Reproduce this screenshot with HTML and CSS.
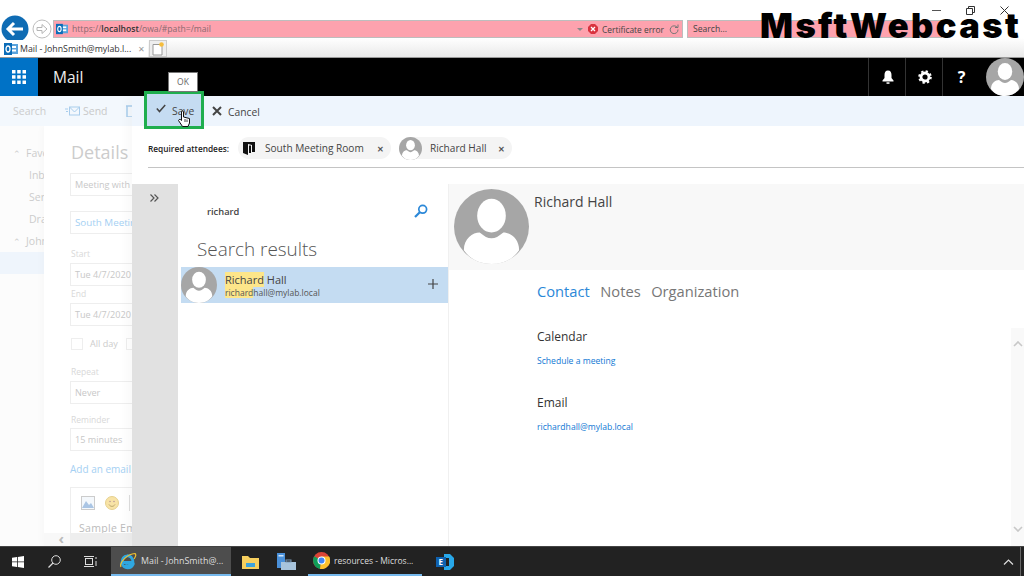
FILE: index.html
```html
<!DOCTYPE html>
<html lang="en">
<head>
<meta charset="utf-8">
<title>Mail - JohnSmith@mylab.local</title>
<link rel="stylesheet" href="styles.css">
</head>
<body>
<svg class="defs" width="0" height="0" aria-hidden="true">
  <symbol id="person" viewBox="0 0 76 76">
    <circle cx="38" cy="38" r="38" fill="#a6a6a6"/>
    <ellipse cx="38" cy="27" rx="14.5" ry="17" fill="#fff"/>
    <path d="M10 62C10 50 19 44 26 44C31 48 34 50 38 50C42 50 45 48 50 44C57 44 66 50 66 62C60 71 50 76 38 76C26 76 16 71 10 62Z" fill="#fff"/>
  </symbol>
  <symbol id="ol" viewBox="0 0 14 14">
    <rect x="5" y="2" width="9" height="10" fill="#5ba3dc"/>
    <rect x="7" y="4" width="5" height="2" fill="#fff"/><rect x="7" y="7.5" width="5" height="2" fill="#fff"/>
    <rect x="0" y="1" width="8" height="12" fill="#0b6cb8"/>
    <ellipse cx="4" cy="7" rx="2" ry="3" fill="none" stroke="#fff" stroke-width="1.3"/>
  </symbol>
</svg>

<header class="browser">
  <div class="nav-row">
    <div class="back">
      <svg width="28" height="28" viewBox="0 0 28 28"><circle cx="14" cy="14" r="13.5" fill="#0f6cb4"/><path d="M22 14H7M13 8L7 14L13 20" fill="none" stroke="#fff" stroke-width="3"/></svg>
    </div>
    <div class="forward">
      <svg width="20" height="20" viewBox="0 0 20 20"><circle cx="10" cy="10" r="9" fill="#fff" stroke="#bdbdbd"/><path d="M5 8.5H10V5.500L15 10L10 14.500V11.500H5Z" fill="none" stroke="#b5b5b5"/></svg>
    </div>
    <div class="addr">
      <svg class="fav" width="14" height="14"><use href="#ol"/></svg>
      <span class="url">https://<b>localhost</b>/owa/#path=/mail</span>
      <span class="drop"></span>
      <svg class="cert" width="10" height="10" viewBox="0 0 10 10"><path d="M3 0H7L10 3V7L7 10H3L0 7V3Z" fill="#d9333f"/><path d="M3 3L7 7M7 3L3 7" stroke="#fff" stroke-width="1.300"/></svg>
      <span class="cert-text">Certificate error</span>
      <svg class="reload" width="10" height="10" viewBox="0 0 10 10"><path d="M8.300 3.500A3.900 3.900 0 1 0 9 5.500M6 3.500H9V0.500" fill="none" stroke="#777"/></svg>
    </div>
    <div class="search-box">Search...</div>
  </div>
  <div class="tab-row">
    <div class="tab">
      <svg width="14" height="14"><use href="#ol"/></svg>
      <span class="tab-title">Mail - JohnSmith@mylab.l...</span>
      <span class="tab-x">✕</span>
    </div>
    <div class="new-tab">
      <svg width="12" height="14" viewBox="0 0 12 14"><path d="M1 2.500H8L10 4.500V13H1Z" fill="#fff" stroke="#999"/><circle cx="9.500" cy="2.500" r="2.300" fill="#f6bd3c"/></svg>
    </div>
  </div>
  <div class="win-ctl">
    <svg width="9" height="9" viewBox="0 0 9 9"><path d="M0 4.500H9" stroke="#555"/></svg>
    <svg width="9" height="9" viewBox="0 0 9 9"><path d="M2.500 2.500V.5H8.500V6.500H6.500M.5 2.500H6.500V8.500H.5Z" fill="none" stroke="#333"/></svg>
    <svg width="9" height="9" viewBox="0 0 9 9"><path d="M.5 .5L8.500 8.500M8.500 .5L.5 8.500" stroke="#333"/></svg>
  </div>
</header>
<div class="watermark">MsftWebcast</div>

<div class="suite">
  <div class="waffle">
    <svg width="14" height="14" viewBox="0 0 14 14" fill="#fff"><rect width="3.500" height="3.500"/><rect x="5.200" width="3.500" height="3.500"/><rect x="10.500" width="3.500" height="3.500"/><rect y="5.200" width="3.500" height="3.500"/><rect x="5.200" y="5.200" width="3.500" height="3.500"/><rect x="10.500" y="5.200" width="3.500" height="3.500"/><rect y="10.500" width="3.500" height="3.500"/><rect x="5.200" y="10.500" width="3.500" height="3.500"/><rect x="10.500" y="10.500" width="3.500" height="3.500"/></svg>
  </div>
  <div class="suite-name">Mail</div>
  <div class="suite-btn">
    <svg width="12" height="14" viewBox="0 0 12 14"><path d="M6 0.500C8.500 .5 9.500 2.500 9.500 5V8L11.500 10.500V11.500H.5V10.500L2.500 8V5C2.500 2.500 3.500 .5 6 .5Z" fill="#fff"/><rect x="4.500" y="12.300" width="3" height="1.500" fill="#fff"/></svg>
  </div>
  <div class="suite-btn">
    <svg width="14" height="14" viewBox="0 0 14 14"><circle cx="7" cy="7" r="4" fill="none" stroke="#fff" stroke-width="2.800"/><circle cx="7" cy="7" r="5.800" fill="none" stroke="#fff" stroke-width="2" stroke-dasharray="2.300 2.250"/></svg>
  </div>
  <div class="suite-btn help">?</div>
  <svg class="suite-avatar" width="38" height="38"><use href="#person"/></svg>
</div>

<main class="stage">
  <div class="bg-app">
    <div class="bg-toolbar">
      <span class="bg-search">Search</span>
      <svg class="bg-send" width="15" height="11" viewBox="0 0 15 11"><rect x="4.500" y="1" width="10" height="8" fill="none" stroke="#a9cdec"/><path d="M4.500 1L9.500 6L14.500 1M0 3H3M1 5.500H3" fill="none" stroke="#a9cdec"/></svg>
      <span class="bg-sendt">Send</span>
      <svg class="bg-trash" width="9" height="12" viewBox="0 0 9 12"><path d="M0 1H9M1 1V12H8V1" fill="none" stroke="#a9cdec" stroke-width="1.500"/></svg>
    </div>
    <div class="bg-body">
      <nav class="bg-nav">
        <div class="nav-item group"><span class="caret">⌃</span>Favorites</div>
        <div class="nav-item">Inbox</div>
        <div class="nav-item">Sent</div>
        <div class="nav-item">Drafts</div>
        <div class="nav-item group"><span class="caret">⌃</span>John</div>
        <div class="nav-sel"></div>
      </nav>
      <section class="bg-panel">
        <h2 class="bg-h">Details</h2>
        <div class="bg-field f1">Meeting with Hall</div>
        <div class="bg-field f2 link">South Meeting Room</div>
        <div class="bg-label l1">Start</div>
        <div class="bg-field f3">Tue 4/7/2020</div>
        <div class="bg-label l2">End</div>
        <div class="bg-field f3">Tue 4/7/2020</div>
        <div class="bg-check"><span class="box"></span>All day<span class="box b2"></span></div>
        <div class="bg-label l3">Repeat</div>
        <div class="bg-field f3">Never</div>
        <div class="bg-label l4">Reminder</div>
        <div class="bg-field f4">15 minutes</div>
        <div class="bg-add link">Add an email reminder</div>
        <div class="bg-editor">
          <div class="ed-icons">
            <svg width="14" height="14" viewBox="0 0 14 14"><rect x=".5" y=".5" width="13" height="13" fill="#f4f8fc" stroke="#ccc"/><path d="M1 12L5 5L8 9L10 7L13 12Z" fill="#aac5e4"/></svg>
            <svg width="14" height="14" viewBox="0 0 14 14"><circle cx="7" cy="7" r="6.500" fill="#f8e3a6" stroke="#e5d08f"/><circle cx="5" cy="5.500" r=".8" fill="#b99"/><circle cx="9" cy="5.500" r=".8" fill="#b99"/><path d="M4 8.500C5.500 11 8.500 11 10 8.500" fill="none" stroke="#b9a56a"/></svg>
            <span class="ed-sep"></span>
          </div>
          <div class="ed-text">Sample Email</div>
        </div>
      </section>
    </div>
    <div class="bg-scroll"><span class="bg-left">‹</span></div>
  </div>

  <div class="modal">
    <div class="m-toolbar">
      <button class="m-save">
        <svg width="10" height="9" viewBox="0 0 10 9"><path d="M.8 4.500L3.500 7.500L9.200 1" fill="none" stroke="#444" stroke-width="1.500"/></svg>
        <span>Save</span>
      </button>
      <button class="m-cancel">
        <svg width="10" height="10" viewBox="0 0 10 10"><path d="M1 1L9 9M9 1L1 9" stroke="#444" stroke-width="2"/></svg>
        <span>Cancel</span>
      </button>
    </div>
    <div class="attendees">
      <span class="att-label">Required attendees:</span>
      <span class="chip room">
        <svg width="12" height="13" viewBox="0 0 12 13"><path d="M0 0H12V10H9V3L5 2V13L0 11Z" fill="#111"/><path d="M6 3.500H8V11H6Z" fill="#111"/></svg>
        <span class="chip-t">South Meeting Room</span>
        <span class="chip-x">✕</span>
      </span>
      <span class="chip person">
        <svg width="23" height="23"><use href="#person"/></svg>
        <span class="chip-t">Richard Hall</span>
        <span class="chip-x">✕</span>
      </span>
    </div>
    <div class="m-body">
      <aside class="rail">
        <svg width="9" height="8" viewBox="0 0 9 8"><path d="M.5 .5L4 4L.5 7.500M4.500 .5L8 4L4.500 7.500" fill="none" stroke="#555" stroke-width="1.200"/></svg>
      </aside>
      <section class="results">
        <div class="q-row">
          <span class="query">richard</span>
          <svg width="14" height="14" viewBox="0 0 14 14"><circle cx="8.700" cy="5.300" r="3.900" fill="none" stroke="#2b88d8" stroke-width="1.700"/><path d="M5.800 8.200L1 13" stroke="#2b88d8" stroke-width="2.200"/></svg>
        </div>
        <h2 class="res-h">Search results</h2>
        <div class="res-row">
          <svg width="36" height="36"><use href="#person"/></svg>
          <div class="res-text">
            <div class="res-name"><mark>Richard</mark> Hall</div>
            <div class="res-mail"><mark>richard</mark>hall@mylab.local</div>
          </div>
          <svg class="res-plus" width="10" height="10" viewBox="0 0 10 10"><path d="M5 0V10M0 5H10" stroke="#444" stroke-width="1.200"/></svg>
        </div>
      </section>
      <section class="card">
        <div class="card-head">
          <svg width="75" height="75"><use href="#person"/></svg>
          <h2 class="card-name">Richard Hall</h2>
        </div>
        <div class="card-body">
          <div class="tabs"><span class="on">Contact</span><span>Notes</span><span>Organization</span></div>
          <h3 class="sec-h cal">Calendar</h3>
          <a class="sec-l">Schedule a meeting</a>
          <h3 class="sec-h em">Email</h3>
          <a class="sec-l">richardhall@mylab.local</a>
          <div class="scroll">
            <svg width="10" height="6" viewBox="0 0 10 6"><path d="M1 5L5 1L9 5" fill="none" stroke="#c8c8c8" stroke-width="1.600"/></svg>
            <svg width="10" height="6" viewBox="0 0 10 6"><path d="M1 1L5 5L9 1" fill="none" stroke="#c8c8c8" stroke-width="1.600"/></svg>
          </div>
        </div>
      </section>
    </div>
  </div>
  <div class="tooltip">OK</div>
  <svg class="hand" width="13" height="17" viewBox="0 0 13 17"><path d="M3.500 9V2C3.500 .5 5.500 .5 5.500 2V7L11.500 8.500V13L10 16.500H4.500L.5 10.500C1 9 2.500 9 3.500 10.500Z" fill="#fff" stroke="#111"/><path d="M7 9V12M9 9.500V12" stroke="#111" stroke-width=".8"/></svg>
</main>

<footer class="taskbar">
  <svg class="tb-win" width="12" height="12" viewBox="0 0 12 12" fill="#fff"><path d="M0 1.700L5 1V5.500H0ZM5.800 .9L12 0V5.500H5.800ZM0 6.300H5V11L0 10.300ZM5.800 6.300H12V12L5.800 11.100Z"/></svg>
  <svg class="tb-search" width="13" height="13" viewBox="0 0 13 13"><circle cx="8" cy="5" r="4.300" fill="none" stroke="#ddd"/><path d="M5 8L.5 12.500" stroke="#ddd" stroke-width="1.200"/></svg>
  <svg class="tb-view" width="13" height="11" viewBox="0 0 13 11"><rect x="1.500" y="2.500" width="7" height="6" fill="none" stroke="#ddd"/><path d="M0 .5H10M0 10.500H10M12 1V3M12 5V10" stroke="#ddd"/></svg>
  <div class="tb-app active ie">
    <svg width="18" height="18" viewBox="0 0 18 18"><path d="M3 10.500H14C14 6 11 3.500 8 3.800C5 4 3 7 3 10.500C3 14 6 16 9 15.800C11.500 15.600 13 14.500 13.800 12.800H10.500C9.500 14 7 14 6.300 12.500" fill="none" stroke="#2fa7e0" stroke-width="2.800"/><path d="M2 15C0 11 8 2 16 1.500C17.500 2.500 16.500 5 15 7" fill="none" stroke="#f2c230" stroke-width="1.200"/></svg>
    <span>Mail - JohnSmith@...</span>
  </div>
  <svg class="tb-icon folder" width="17" height="14" viewBox="0 0 17 14"><path d="M0 1H6L8 3H17V14H0Z" fill="#f6cf5e"/><rect x="4" y="8" width="9" height="4" fill="#3da3dc"/></svg>
  <svg class="tb-icon server" width="19" height="17" viewBox="0 0 19 17"><rect width="8" height="15" fill="#4a90d9"/><rect x="1.500" y="2" width="5" height="1.500" fill="#cfe5fa"/><rect x="4" y="9" width="15" height="8" fill="#a8c4dc"/><rect x="9" y="7" width="5" height="2" fill="none" stroke="#7a9ab8"/></svg>
  <div class="tb-app open chrome">
    <svg width="17" height="17" viewBox="0 0 17 17"><circle cx="8.500" cy="8.500" r="8.500" fill="#db4437"/><path d="M8.500 8.500L1.200 4.300A8.500 8.500 0 0 0 7 16.900Z" fill="#0f9d58"/><path d="M8.500 4.500H16.100A8.500 8.500 0 0 1 7 16.900Z" fill="#fbc02d"/><circle cx="8.500" cy="8.500" r="4" fill="#fff"/><circle cx="8.500" cy="8.500" r="3" fill="#4285f4"/></svg>
    <span>resources - Micros...</span>
  </div>
  <svg class="tb-icon ex" width="18" height="16" viewBox="0 0 18 16"><path d="M8 0L14 0L18 4V12L14 16H8V12H13V4H8Z" fill="#28a8ea"/><rect y="3" width="10" height="10" fill="#0f62b0"/><text x="2.500" y="11" class="ex-t">E</text></svg>
  <svg class="tb-chev" width="11" height="6" viewBox="0 0 11 6"><path d="M1 5.500L5.500 1L10 5.500" fill="none" stroke="#ddd" stroke-width="1.200"/></svg>
  <span class="tb-end"></span>
</footer>
</body>
</html>
```
FILE: styles.css
```css
* { box-sizing: border-box; }
html, body { margin: 0; padding: 0; }
body {
  width: 1024px; height: 576px; overflow: hidden; position: relative;
  display: flex; flex-direction: column; background: #fff;
  font-family: "Open Sans", "Noto Sans", sans-serif; color: #444;
}
h2, h3 { margin: 0; font-weight: 400; }
.defs { position: absolute; }
svg { display: block; flex: none; }

/* browser chrome */
.browser { height: 58px; flex: none; position: relative; border-bottom: 1px solid #999; background: linear-gradient(#fff 38px, #e9e9e9 57px); }
.nav-row { display: flex; align-items: center; height: 28px; margin-top: 15px; padding-left: 1px; position: absolute; top: 0; left: 0; }
.back { width: 28px; }
.forward { width: 20px; margin-left: 3px; }
.addr {
  width: 630px; height: 18px; margin-left: 1px; background: #fda2ae; border: 1px solid #bdbdbd;
  display: flex; align-items: center; padding-left: 2px; font-size: 8.600px; color: #777;
}
.addr .fav { width: 12px; height: 12px; }
.url { margin-left: 4px; flex: 1; color: #8a6a70; }
.url b { color: #333; font-weight: 600; }
.drop { border: 3px solid transparent; border-top: 3px solid #888; margin-top: 3px; }
.cert { margin-left: 5px; }
.cert-text { margin-left: 4px; color: #444; font-size: 8.400px; }
.reload { margin: 0 3px 0 5px; }
.search-box { width: 255px; height: 18px; margin-left: 4px; background: #fda2ae; border: 1px solid #bdbdbd; font-size: 8.600px; line-height: 16px; padding-left: 5px; color: #444; }
.tab-row { position: absolute; left: 0; top: 40px; height: 17px; display: flex; align-items: stretch; }
.tab { width: 148px; background: #fff; display: flex; align-items: center; padding-left: 4px; gap: 2px; font-size: 8.800px; color: #333; }
.tab-title { width: 116px; white-space: nowrap; }
.tab-x { font-size: 8px; color: #999; }
.new-tab { width: 18px; margin-left: 1px; background: #eee; border: 1px solid #ccc; display: flex; align-items: center; justify-content: center; }
.win-ctl { position: absolute; right: 15px; top: 6px; display: flex; gap: 25px; }
.watermark {
  position: absolute; left: 760px; top: 5px; font-family: Inter, "DejaVu Sans", sans-serif; font-weight: 900;
  font-size: 34.500px; line-height: 42px; color: #000; white-space: nowrap; letter-spacing: 2.400px;
}

/* suite bar */
.suite { height: 38px; flex: none; background: #000; display: flex; align-items: center; color: #fff; }
.waffle { width: 38px; height: 38px; background: #0072c6; display: flex; align-items: center; justify-content: center; }
.suite-name { flex: 1; padding-left: 15px; font-size: 15.500px; color: #eee; }
.suite-btn { width: 38px; height: 38px; margin-right: -1px; border-left: 1px solid #333; display: flex; align-items: center; justify-content: center; }
.suite-btn.help { font-size: 16px; font-weight: 700; color: #fff; }
.suite-avatar { margin-left: 7px; margin-right: 0; }

/* stage */
.stage { flex: 1; min-height: 0; position: relative; }
.bg-app { display: flex; flex-direction: column; height: 100%; color: #ccc; position: relative; overflow: hidden; }
.bg-toolbar { height: 30px; flex: none; background: #f3f8fd; display: flex; align-items: center; font-size: 10.500px; }
.bg-search { margin-left: 13px; width: 53px; }
.bg-send { margin-left: -1px; }
.bg-sendt { margin-left: 3px; color: #c9c9c9; }
.bg-trash { margin-left: 18px; }
.bg-body { flex: 1; display: flex; min-height: 0; overflow: hidden; }
.bg-nav { width: 44px; flex: none; background: #fcfcfc; padding-top: 16px; overflow: hidden; font-size: 10.500px; white-space: nowrap; }
.nav-item { height: 22px; line-height: 22px; padding-left: 29px; }
.nav-item.group { padding-left: 13px; }
.caret { display: inline-block; width: 13px; font-size: 9px; line-height: 9px; }
.nav-sel { height: 22px; margin-top: 0; background: #eff5fc; }
.bg-panel { flex: 1; padding-left: 26px; background: #fff; min-width: 0; overflow: hidden; font-size: 9.100px; box-shadow: -3px 0 6px rgba(0,0,0,.02); }
.bg-h { margin: 14px 0 0 1px; line-height: 24px; font-size: 18px; color: #ccc; }
.bg-field { height: 23px; width: 200px; border: 1px solid #eee; line-height: 21px; padding-left: 4px; white-space: nowrap; color: #c8c8c8; }
.f1 { margin-top: 9px; }
.f2 { margin-top: 15px; }
.f3 { margin-top: 3px; }
.f4 { margin-top: 2px; }
.link { color: #a5d0f3; }
.bg-field.link { color: #a5d0f3; font-size: 9.800px; }
.bg-label { height: 12px; line-height: 12px; font-size: 8.500px; color: #d8d8d8; margin-left: 1px; }
.l1 { margin-top: 14px; }
.l2 { margin-top: 2px; }
.l3 { margin-top: 17px; }
.l4 { margin-top: 10px; }
.bg-check { display: flex; align-items: center; margin-top: 12px; height: 11px; padding-left: 1px; }
.box { width: 12px; height: 12px; border: 1px solid #eee; margin-right: 7px; }
.b2 { margin-left: 8px; }
.bg-add { margin-top: 12px; height: 12px; line-height: 12px; white-space: nowrap; font-size: 10px; }
.bg-editor { margin-top: 12px; width: 200px; height: 59px; border: 1px solid #eee; border-bottom: 0; padding: 7px 0 0 10px; overflow: hidden; }
.ed-icons { display: flex; align-items: center; gap: 10px; }
.ed-sep { width: 1px; height: 16px; background: #ddd; }
.ed-text { margin-top: 10px; margin-left: -2px; font-size: 10.500px; letter-spacing: .3px; white-space: nowrap; color: #bbb; }
.bg-scroll { position: absolute; left: 44px; right: 0; bottom: 0; height: 13px; background: #eee; }
.bg-left { display: block; width: 26px; height: 13px; background: #f8f8f8; text-align: right; padding-right: 6px; font-size: 15px; line-height: 11px; color: #bbb; font-weight: 700; }

/* modal */
.modal { position: absolute; left: 132px; top: 0; right: 0; bottom: 0; display: flex; flex-direction: column; background: #fff; box-shadow: -6px 0 8px rgba(0,0,0,.025); }
.m-toolbar { height: 30px; flex: none; background: #eef5fd; display: flex; align-items: flex-start; padding-left: 12px; }
button { font: inherit; padding: 0; background: none; border: 0; color: #444; display: flex; align-items: center; }
.m-save { width: 60px; height: 38px; margin-top: -5px; border: 3px solid #1fae4e; background: #c5dcf2; padding: 2px 0 0 9px; gap: 6px; font-size: 10.300px; position: relative; }
.m-save svg { margin-top: -5px; }
.m-cancel { height: 30px; margin-left: 8px; padding-top: 2px; gap: 6px; font-size: 10.300px; }
.m-cancel svg { margin-top: -2px; }
.attendees { height: 42px; flex: none; margin-left: 16px; border-bottom: 1px solid #c4c4c4; display: flex; align-items: center; padding-top: 3px; }
.att-label { font-size: 8.300px; font-weight: 600; color: #222; width: 90px; white-space: nowrap; }
.chip { height: 22px; border-radius: 11px; background: #f4f4f4; display: flex; align-items: center; font-size: 10.100px; color: #444; }
.room { width: 153px; padding-left: 5px; }
.room .chip-t { margin-left: 10px; flex: 1; }
.person { width: 113px; margin-left: 8px; }
.person .chip-t { margin-left: 8px; flex: 1; }
.chip-t { white-space: nowrap; }
.chip-x { font-size: 8px; font-weight: 700; margin-right: 7px; color: #555; }
.m-body { flex: 1; display: flex; margin-top: 16px; min-height: 0; }
.rail { width: 46px; flex: none; background: #e1e1e1; padding: 10px 0 0 18px; margin-bottom: 0; }
.results { width: 270px; flex: none; padding-top: 0; }
.q-row { height: 55px; padding: 20px 20px 0 29px; display: flex; justify-content: space-between; }
.query { font-size: 9.300px; font-weight: 600; line-height: 16px; color: #444; }
.res-h { margin-left: 19px; height: 28px; line-height: 21px; font-size: 18.900px; font-weight: 300; color: #555; }
.res-row { margin-left: 3px; height: 36px; background: #c4dcf2; display: flex; align-items: center; }
.res-text { margin-left: 8px; flex: 1; }
.res-name { font-size: 11px; line-height: 15px; margin-top: -1px; color: #444; }
.res-mail { font-size: 8.500px; line-height: 11px; color: #555; }
mark { background: #fde68a; color: inherit; }
.res-plus { margin-right: 10px; margin-top: -2px; }
.card { flex: 1; min-width: 0; display: flex; flex-direction: column; border-left: 1px solid #f0f0f0; }
.card-head { height: 86px; flex: none; background: #f8f8f8; display: flex; padding: 5px 0 0 5px; }
.card-name { margin-left: 5px; margin-top: 4px; font-size: 14px; line-height: 18px; color: #444; }
.card-body { flex: 1; position: relative; padding-left: 88px; }
.tabs { display: flex; gap: 10.500px; margin-top: 11px; font-size: 14.700px; line-height: 21px; color: #777; }
.tabs .on { color: #2b88d8; }
.sec-h { font-size: 12px; line-height: 16px; color: #333; }
.cal { margin-top: 27px; }
.em { margin-top: 27px; }
.sec-l { display: block; margin-top: 9px; height: 14px; font-size: 8.600px; line-height: 14px; color: #0f78d4; }
.scroll { position: absolute; right: 0; top: 58px; bottom: 0; width: 13px; background: #f9f9f9; display: flex; flex-direction: column; justify-content: space-between; align-items: center; padding: 13px 0 14px; }

.tooltip { position: absolute; left: 168px; top: -24px; width: 30px; height: 20px; background: #fff; border: 1px solid #777; font-size: 8.500px; line-height: 18px; text-align: center; color: #666; }
.hand { position: absolute; left: 178px; top: 14px; }

/* taskbar */
.taskbar { height: 30px; flex: none; background: #222; border-top: 1px solid #444; display: flex; align-items: center; position: relative; color: #ddd; }
.tb-win { margin-left: 12px; }
.tb-search { margin-left: 24px; }
.tb-view { margin-left: 23px; }
.tb-app { height: 29px; display: flex; align-items: center; white-space: nowrap; border-bottom: 2px solid #76b9ed; }
.tb-app.active { width: 120px; margin-left: 14px; background: #4d4d4d; padding-left: 8px; gap: 4px; font-size: 8.900px; }
.tb-app.open { width: 114px; margin-left: 12px; padding-left: 5px; gap: 4px; font-size: 8.500px; }
.folder { margin-left: 11px; }
.server { margin-left: 18px; }
.ex { margin-left: 14px; }
.ex-t { font-family: "Open Sans", sans-serif; font-size: 8px; font-weight: 700; fill: #fff; }
.tb-chev { margin-left: auto; margin-right: 6px; }
.tb-end { width: 1px; height: 30px; background: #666; margin-right: 3px; }
```
